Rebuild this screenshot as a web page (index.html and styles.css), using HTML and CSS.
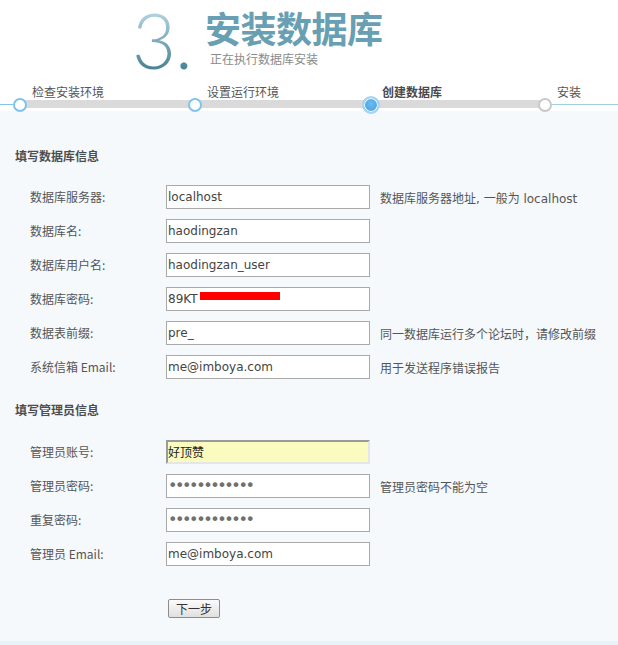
FILE: index.html
```html
<!DOCTYPE html>
<html lang="zh-CN">
<head>
<meta charset="utf-8">
<title>安装数据库</title>
<link rel="stylesheet" href="styles.css">
</head>
<body>
<div class="header">
  <div class="num">3.</div>
  <div class="titles">
    <div class="title">安装数据库</div>
    <div class="subtitle">正在执行数据库安装</div>
  </div>
</div>
<div class="steps">
  <div class="step done">
    <div class="step-label">检查安装环境</div>
    <div class="dot"></div>
  </div>
  <div class="step done">
    <div class="step-label">设置运行环境</div>
    <div class="dot"></div>
  </div>
  <div class="step current">
    <div class="step-label">创建数据库</div>
    <div class="dot"></div>
  </div>
  <div class="step todo">
    <div class="step-label">安装</div>
    <div class="dot"></div>
  </div>
</div>
<div class="content">
  <div class="section-title">填写数据库信息</div>
  <div class="row"><div class="label">数据库服务器:</div><div class="field">localhost</div><div class="hint">数据库服务器地址, 一般为 localhost</div></div>
  <div class="row"><div class="label">数据库名:</div><div class="field">haodingzan</div></div>
  <div class="row"><div class="label">数据库用户名:</div><div class="field">haodingzan_user</div></div>
  <div class="row"><div class="label">数据库密码:</div><div class="field">89KT<span class="redact"></span></div></div>
  <div class="row"><div class="label">数据表前缀:</div><div class="field">pre_</div><div class="hint">同一数据库运行多个论坛时，请修改前缀</div></div>
  <div class="row"><div class="label">系统信箱 Email:</div><div class="field">me@imboya.com</div><div class="hint">用于发送程序错误报告</div></div>

  <div class="section-title second">填写管理员信息</div>
  <div class="row"><div class="label">管理员账号:</div><div class="field focus">好顶赞</div></div>
  <div class="row"><div class="label">管理员密码:</div><div class="field dots">••••••••••••</div><div class="hint">管理员密码不能为空</div></div>
  <div class="row"><div class="label">重复密码:</div><div class="field dots">••••••••••••</div></div>
  <div class="row"><div class="label">管理员 Email:</div><div class="field">me@imboya.com</div></div>

  <div class="actions"><button class="btn" type="button">下一步</button></div>
</div>
<div class="footer-strip"></div>
</body>
</html>
```
FILE: styles.css
```css
html, body {
  margin: 0;
  padding: 0;
  background: #ffffff;
}
body {
  width: 618px;
  font-family: "DejaVu Sans", "Noto Sans CJK SC", sans-serif;
  font-size: 12px;
  color: #555555;
}
.header {
  height: 80px;
  display: grid;
  grid-template-columns: 70px auto;
  padding-left: 135px;
  box-sizing: border-box;
}
.num {
  font-family: "Lato", "DejaVu Sans", sans-serif;
  font-weight: 300;
  font-size: 76px;
  line-height: 80px;
  margin-left: -3px;
  letter-spacing: -1px;
  background: linear-gradient(#b4d4e0 15%, #4a8597 85%);
  -webkit-background-clip: text;
  background-clip: text;
  color: transparent;
}
.titles {
  padding-top: 7px;
}
.title {
  font-family: "Noto Sans CJK SC", sans-serif;
  font-weight: 700;
  font-size: 36px;
  line-height: 40px;
  height: 40px;
  color: #689fb2;
  letter-spacing: -0.5px;
}
.subtitle {
  font-family: "Noto Sans CJK SC", sans-serif;
  font-size: 12px;
  line-height: 14px;
  color: #8a8a8a;
  margin-left: 5px;
  margin-top: 5px;
}
.steps {
  height: 31px;
  box-sizing: border-box;
  padding-top: 5px;
  padding-left: 13px;
  display: flex;
  background:
    linear-gradient(#dadada, #dadada) 20px 20px / 525px 8px no-repeat,
    linear-gradient(#86c4ea, #86c4ea) 0 24px / 13px 1px no-repeat,
    linear-gradient(#a3cfe2, #a3cfe2) 552px 24px / 66px 1px no-repeat;
}
.step {
  width: 175px;
  flex: none;
}
.step:last-child {
  width: 60px;
}
.step-label {
  font-family: "Noto Sans CJK SC", sans-serif;
  font-size: 12px;
  line-height: 14px;
  height: 14px;
  margin-left: 19px;
  color: #555555;
}
.current .step-label {
  font-weight: 700;
  color: #4a4a4a;
}
.dot {
  width: 14px;
  height: 14px;
  box-sizing: border-box;
  border-radius: 50%;
  background: #ffffff;
  border: 2px solid #7ec3ee;
  margin-top: -1px;
}
.current .dot {
  width: 18px;
  height: 18px;
  margin-left: -1px;
  margin-top: -3px;
  border: 2px solid #a3d4f3;
  background: radial-gradient(circle at 50% 40%, #6cbaf0, #3e9de0);
  box-shadow: inset 0 0 0 1px #ffffff;
}
.todo .dot {
  border-color: #c8c8c8;
}
.content {
  background: #f5f9fc;
  padding: 35px 0 24px 15px;
  height: 530px;
  box-sizing: border-box;
}
.section-title {
  font-family: "Noto Sans CJK SC", sans-serif;
  font-weight: 700;
  font-size: 12px;
  line-height: 20px;
  color: #4e4e4e;
  margin-bottom: 19px;
}
.section-title.second {
  margin-top: 21px;
  margin-bottom: 20px;
}
.row {
  display: flex;
  align-items: center;
  height: 24px;
  margin-bottom: 10px;
}
.label {
  width: 151px;
  flex: none;
  box-sizing: border-box;
  padding-left: 15px;
  font-family: "Noto Sans CJK SC", sans-serif;
  color: #555555;
  line-height: 24px;
}
.field {
  width: 204px;
  height: 24px;
  flex: none;
  box-sizing: border-box;
  border: 1px solid #a9a9a9;
  background: #ffffff;
  padding-left: 1px;
  font-family: "DejaVu Sans", "Noto Sans CJK SC", sans-serif;
  font-size: 12px;
  line-height: 22px;
  color: #444444;
  white-space: nowrap;
  overflow: hidden;
}
.field.focus {
  border-top: 2px solid #9a9a9a;
  border-left: 2px solid #9a9a9a;
  border-right: 2px solid #e6e6e6;
  border-bottom: 2px solid #e6e6e6;
  background: #fafcbf;
  padding-left: 0;
  line-height: 20px;
  color: #222222;
  font-family: "Noto Sans CJK SC", sans-serif;
}
.field.dots {
  color: #707070;
  font-size: 16px;
  letter-spacing: -2.4px;
  line-height: 22px;
}
.redact {
  display: inline-block;
  width: 80px;
  height: 8px;
  background: #ff0000;
  vertical-align: 3px;
  margin-left: 2px;
}
.hint {
  margin-left: 10px;
  font-family: "DejaVu Sans", "Noto Sans CJK SC", sans-serif;
  color: #555555;
  white-space: nowrap;
}
.actions {
  padding-left: 153px;
  padding-top: 23px;
}
.btn {
  width: 52px;
  height: 19px;
  padding: 0;
  border: 1px solid #8c8c8c;
  border-radius: 2px;
  background: linear-gradient(#fbfbfb, #e0e0e0);
  font-family: "Noto Sans CJK SC", sans-serif;
  font-size: 12px;
  line-height: 17px;
  color: #333333;
}
.footer-strip {
  height: 4px;
  background: #e6f3fa;
}
```
